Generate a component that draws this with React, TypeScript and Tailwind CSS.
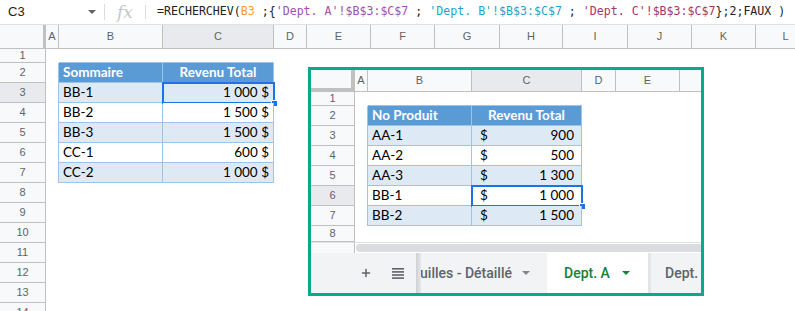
import React from "react";
import { Plus } from "lucide-react";

type Col = { label: string; w: string };

const outerCols: Col[] = [
  { label: "A", w: "w-[13px]" },
  { label: "B", w: "w-[104px]" },
  { label: "C", w: "w-[111px]" },
  { label: "D", w: "w-[33px]" },
  { label: "E", w: "w-[64px]" },
  { label: "F", w: "w-[64px]" },
  { label: "G", w: "w-[65px]" },
  { label: "H", w: "w-[63px]" },
  { label: "I", w: "w-[65px]" },
  { label: "J", w: "w-[64px]" },
  { label: "K", w: "w-[64px]" },
  { label: "L", w: "w-[60px]" },
];

const innerCols: Col[] = [
  { label: "A", w: "w-[13px]" },
  { label: "B", w: "w-[104px]" },
  { label: "C", w: "w-[110px]" },
  { label: "D", w: "w-[34px]" },
  { label: "E", w: "w-[64px]" },
  { label: "", w: "w-[30px]" },
];

const summary = [
  ["BB-1", "1 000 $"],
  ["BB-2", "1 500 $"],
  ["BB-3", "1 500 $"],
  ["CC-1", "600 $"],
  ["CC-2", "1 000 $"],
];

const deptA = [
  ["AA-1", "900"],
  ["AA-2", "500"],
  ["AA-3", "1 300"],
  ["BB-1", "1 000"],
  ["BB-2", "1 500"],
];

function Caret({ color }: { color: string }) {
  return (
    <svg width="8" height="4" viewBox="0 0 8 4" className="shrink-0">
      <path d="M0 0h8L4 4z" fill={color} />
    </svg>
  );
}

function Selection() {
  return (
    <div className="absolute -left-[1px] -top-[1px] -right-[2px] -bottom-[2px] border-2 border-[#1a73e8]">
      <div className="absolute -right-[5px] -bottom-[5px] w-[7px] h-[7px] bg-[#1a73e8] border border-white" />
    </div>
  );
}

function FormulaBar() {
  return (
    <div className="flex items-center h-[25px] border-b border-[#e0e0e0] font-['Liberation_Sans',Arial,sans-serif]">
      <div className="w-[104px] flex items-center justify-between pl-[8px] pr-[8px] text-[13px] text-[#222]">
        <span>C3</span>
        <Caret color="#5f6368" />
      </div>
      <div className="w-px h-[16px] bg-[#dadce0]" />
      <div className="w-[40px] flex justify-center font-['DejaVu_Serif',serif] italic text-[17px] text-[#c4c7cb] leading-none">fx</div>
      <div className="w-px h-[14px] bg-[#dadce0]" />
      <div className="pl-[11px] font-['DejaVu_Sans_Mono',monospace] text-[11.6px] text-[#222] whitespace-pre">
        =RECHERCHEV(<span className="text-[#f29b2c]">B3</span> ;{"{"}
        <span className="text-[#a04fb0]">'Dept. A'!$B$3:$C$7</span> ;{" "}
        <span className="text-[#1fa3cc]">'Dept. B'!$B$3:$C$7</span> ;{" "}
        <span className="text-[#a3356a]">'Dept. C'!$B$3:$C$7</span>
        {"}"};2;FAUX )
      </div>
    </div>
  );
}

function OuterSheet() {
  const rows = Array.from({ length: 14 }, (_, i) => i + 1);
  return (
    <div className="font-['Liberation_Sans',Arial,sans-serif]">
      <div className="flex h-[24px] text-[11px] text-[#5f6368]">
        <div className="w-[46px] shrink-0 bg-[#f8f9fa] border-r-[3px] border-b border-[#c0c0c0]" />
        {outerCols.map((c) => (
          <div
            key={c.label}
            className={`${c.w} shrink-0 flex items-center justify-center border-r border-b border-[#c0c0c0] ${
              c.label === "C" ? "bg-[#e8eaed]" : "bg-[#f8f9fa]"
            }`}
          >
            {c.label}
          </div>
        ))}
      </div>
      {rows.map((r) => {
        const inTable = r >= 2 && r <= 7;
        const band = r === 3 || r === 5 || r === 7 ? "bg-[#dde9f5]" : "bg-white";
        const data = r >= 3 && r <= 7 ? summary[r - 3] : null;
        return (
          <div key={r} className={`flex ${r === 1 ? "h-[14px]" : "h-[20px]"}`}>
            <div
              className={`w-[46px] shrink-0 flex items-center justify-center border-r border-b border-[#c0c0c0] text-[11px] text-[#5f6368] ${
                r === 3 ? "bg-[#e8eaed]" : "bg-[#f8f9fa]"
              }`}
            >
              {r}
            </div>
            <div className={`w-[13px] shrink-0 ${inTable ? "border-r border-[#9dc3e6]" : ""}`} />
            {r === 1 && (
              <>
                <div className="w-[104px] shrink-0 border-b border-[#9dc3e6]" />
                <div className="w-[111px] shrink-0 border-b border-[#9dc3e6]" />
              </>
            )}
            {r === 2 && (
              <>
                <div className="w-[104px] shrink-0 flex items-center pl-[4px] bg-[#5b9bd5] border-r border-b border-[#9dc3e6] font-['Lato',sans-serif] font-bold text-[13.5px] text-white">
                  Sommaire
                </div>
                <div className="w-[111px] shrink-0 flex items-center justify-center bg-[#5b9bd5] border-r border-b border-[#9dc3e6] font-['Lato',sans-serif] font-bold text-[13.5px] text-white">
                  Revenu Total
                </div>
              </>
            )}
            {data && (
              <>
                <div className={`w-[104px] shrink-0 flex items-center pl-[4px] ${band} border-r border-b border-[#9dc3e6] font-['Lato',sans-serif] text-[13.5px] text-black`}>
                  {data[0]}
                </div>
                <div className={`relative w-[111px] shrink-0 flex items-center justify-end pr-[4px] ${band} border-r border-b border-[#9dc3e6] font-['Lato',sans-serif] text-[13.5px] text-black`}>
                  {data[1]}
                  {r === 3 && <Selection />}
                </div>
              </>
            )}
          </div>
        );
      })}
    </div>
  );
}

function InnerSheet() {
  const rows = Array.from({ length: 8 }, (_, i) => i + 1);
  return (
    <div className="absolute left-[308px] top-[67px] w-[396px] h-[229px] border-[3px] border-[#0aa98b] bg-white overflow-hidden flex flex-col">
      <div className="flex h-[22px] shrink-0 font-['Liberation_Sans',Arial,sans-serif] text-[11px] text-[#5f6368]">
        <div className="w-[44px] shrink-0 bg-[#f8f9fa] border-r-4 border-b-4 border-[#c0c0c0]" />
        {innerCols.map((c, i) => (
          <div
            key={i}
            className={`${c.w} shrink-0 flex items-center justify-center border-r border-b border-[#c0c0c0] ${
              c.label === "C" ? "bg-[#e8eaed]" : "bg-[#f8f9fa]"
            }`}
          >
            {c.label}
          </div>
        ))}
      </div>
      {rows.map((r) => {
        const inTable = r >= 2 && r <= 7;
        const band = r === 3 || r === 5 || r === 7 ? "bg-[#dde9f5]" : "bg-white";
        const data = r >= 3 && r <= 7 ? deptA[r - 3] : null;
        const h = r === 1 ? "h-[14px]" : r === 8 ? "h-[16px]" : "h-[20px]";
        return (
          <div key={r} className={`flex shrink-0 ${h}`}>
            <div
              className={`w-[44px] shrink-0 flex items-center justify-center border-r border-b border-[#c0c0c0] font-['Liberation_Sans',Arial,sans-serif] text-[11px] text-[#5f6368] ${
                r === 6 ? "bg-[#e8eaed]" : "bg-[#f8f9fa]"
              }`}
            >
              {r}
            </div>
            <div className={`w-[13px] shrink-0 ${inTable ? "border-r border-[#9dc3e6]" : ""}`} />
            {r === 1 && (
              <>
                <div className="w-[104px] shrink-0 border-b border-[#9dc3e6]" />
                <div className="w-[110px] shrink-0 border-b border-[#9dc3e6]" />
              </>
            )}
            {r === 2 && (
              <>
                <div className="w-[104px] shrink-0 flex items-center pl-[4px] bg-[#5b9bd5] border-r border-b border-[#9dc3e6] font-['Lato',sans-serif] font-bold text-[13.5px] text-white">
                  No Produit
                </div>
                <div className="w-[110px] shrink-0 flex items-center justify-center bg-[#5b9bd5] border-r border-b border-[#9dc3e6] font-['Lato',sans-serif] font-bold text-[13.5px] text-white">
                  Revenu Total
                </div>
              </>
            )}
            {data && (
              <>
                <div className={`w-[104px] shrink-0 flex items-center pl-[4px] ${band} border-r border-b border-[#9dc3e6] font-['Lato',sans-serif] text-[13.5px] text-black`}>
                  {data[0]}
                </div>
                <div className={`relative w-[110px] shrink-0 flex items-center justify-between pl-[8px] pr-[7px] ${band} border-r border-b border-[#9dc3e6] font-['Lato',sans-serif] text-[13.5px] text-black`}>
                  <span>$</span>
                  <span>{data[1]}</span>
                  {r === 6 && <Selection />}
                </div>
              </>
            )}
          </div>
        );
      })}
      <div className="flex h-[11px] shrink-0 border-t border-[#e0e0e0]">
        <div className="w-[44px] shrink-0 bg-[#f8f9fa] border-r border-[#c0c0c0]" />
        <div className="flex-1 pl-[1px] pt-[1px]">
          <div className="h-[8px] w-[400px] rounded-full bg-[#dadce0]" />
        </div>
      </div>
      <div className="flex flex-1 bg-[#f1f3f4] font-['Roboto',sans-serif] font-medium text-[14px]">
        <div className="w-[105px] shrink-0 flex items-center pl-[49px] gap-[20px] text-[#5f6368]">
          <Plus size={12} strokeWidth={3} />
          <svg width="12" height="11" viewBox="0 0 12 11">
            <rect y="0" width="12" height="1.6" fill="#5f6368" />
            <rect y="3.1" width="12" height="1.6" fill="#5f6368" />
            <rect y="6.2" width="12" height="1.6" fill="#5f6368" />
            <rect y="9.3" width="12" height="1.6" fill="#5f6368" />
          </svg>
        </div>
        <div className="w-[5px] shrink-0 bg-gradient-to-r from-[#cdd0d3] to-[#e6e8ea]" />
        <div className="w-[126px] shrink-0 overflow-hidden flex items-center justify-end gap-[10px] pr-[17px] text-[#5f6368] whitespace-nowrap">
          <span>Feuilles - Détaillé</span>
          <Caret color="#80868b" />
        </div>
        <div className="w-[101px] shrink-0 bg-white flex items-center gap-[12px] pl-[17px] text-[#188038]">
          <span>Dept. A</span>
          <Caret color="#188038" />
        </div>
        <div className="w-[3px] shrink-0 bg-[#e3e5e8]" />
        <div className="flex-1 flex items-center pl-[14px] text-[#5f6368] whitespace-nowrap">Dept. B</div>
      </div>
    </div>
  );
}

export default function App() {
  return (
    <div className="relative w-[795px] h-[311px] overflow-hidden bg-white">
      <FormulaBar />
      <OuterSheet />
      <InnerSheet />
    </div>
  );
}
